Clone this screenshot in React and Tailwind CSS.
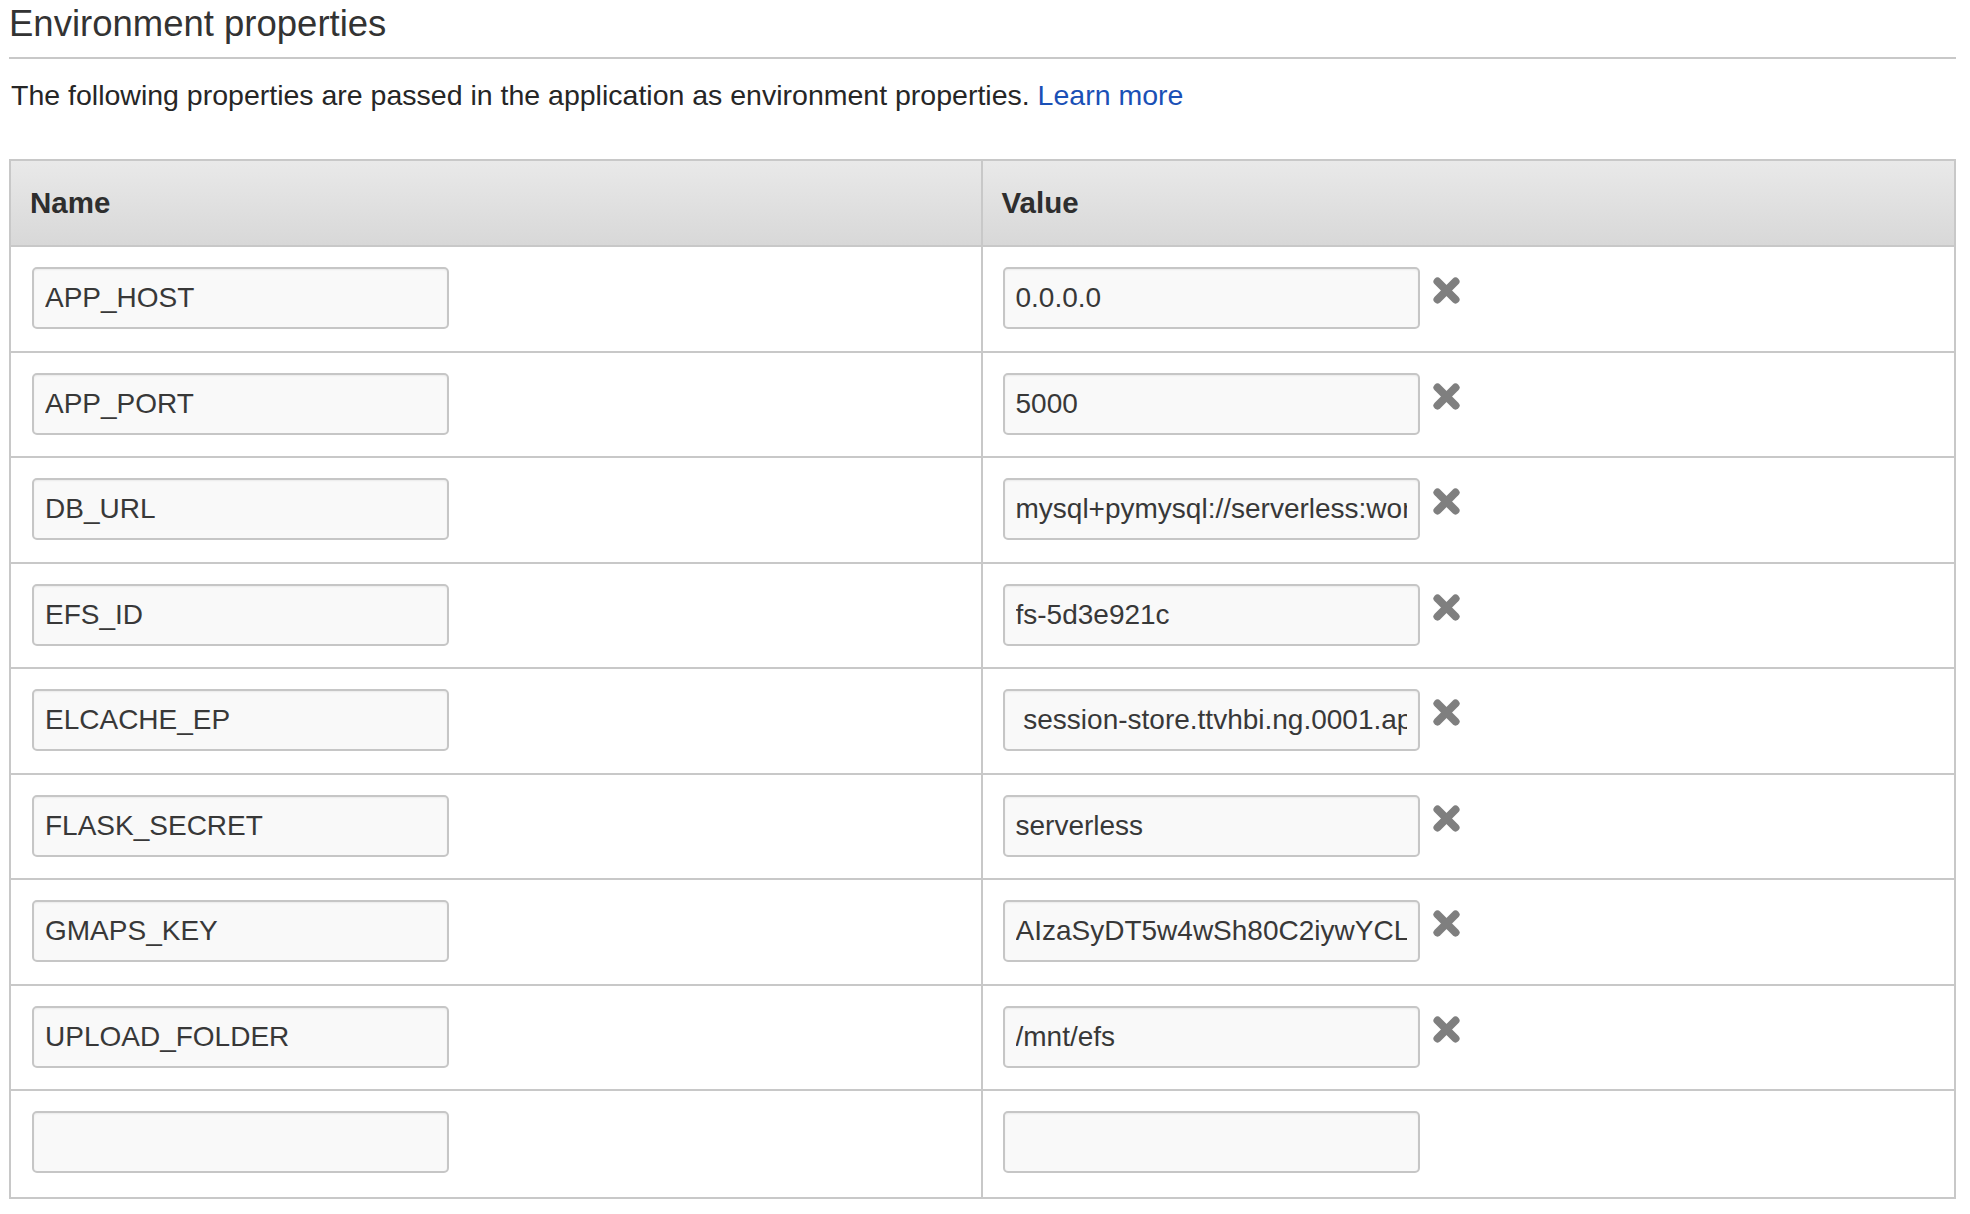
import React from "react";

const rows = [
  ["APP_HOST", "0.0.0.0"],
  ["APP_PORT", "5000"],
  ["DB_URL", "mysql+pymysql://serverless:workshop@serverless.cluster-c1.ap-southeast-1.rds.amazonaws.com/serverless"],
  ["EFS_ID", "fs-5d3e921c"],
  ["ELCACHE_EP", " session-store.ttvhbi.ng.0001.apse1.cache.amazonaws.com:6379"],
  ["FLASK_SECRET", "serverless"],
  ["GMAPS_KEY", "AIzaSyDT5w4wSh80C2iywYCLkq9oB3xHn7uPbQ"],
  ["UPLOAD_FOLDER", "/mnt/efs"],
  ["", ""],
];

function RemoveIcon() {
  return (
    <svg width="27" height="27" viewBox="0 0 27 27" className="shrink-0">
      <g stroke="#7f7f7f" strokeWidth="8" strokeLinecap="round">
        <line x1="4.5" y1="4.5" x2="22.5" y2="22.5" />
        <line x1="22.5" y1="4.5" x2="4.5" y2="22.5" />
      </g>
    </svg>
  );
}

function Field({ value }) {
  return (
    <input
      readOnly
      value={value}
      className="h-[62px] w-[417px] shrink-0 rounded-[5px] border-2 border-[#c6c6c6] bg-[#f9f9f9] pl-[11px] pr-[11px] text-[28px] text-[#383838] shadow-[inset_0_1px_2px_rgba(0,0,0,0.06)] outline-none"
    />
  );
}

export default function App() {
  return (
    <div className="min-h-[1214px] bg-white text-[#333] [font-family:'Liberation_Sans',Arial,Helvetica,sans-serif]">
      <div className="ml-[9px] w-[1947px]">
        <div className="border-b-2 border-[#c8c8c8] pt-[4px] pb-[13px]">
          <h1 className="text-[36.5px] leading-[40px] font-normal text-[#333]">Environment properties</h1>
        </div>
        <p className="mt-[20px] pl-[2px] text-[28.5px] leading-[32px] text-[#262626]">
          The following properties are passed in the application as environment properties.{" "}
          <a className="text-[#1a50b6]">Learn more</a>
        </p>
        <div className="mt-[48px] border-2 border-[#c8c8c8]">
          <div className="grid h-[86px] grid-cols-2 border-b-2 border-[#c8c8c8] bg-gradient-to-b from-[#e9e9e9] to-[#d8d8d8]">
            <div className="flex items-center border-r-2 border-[#c8c8c8] pl-[19px] text-[29.5px] font-bold text-[#2e2e2e]">
              Name
            </div>
            <div className="flex items-center pl-[19px] text-[29.5px] font-bold text-[#2e2e2e]">Value</div>
          </div>
          {rows.map(([name, value], i) => (
            <div
              key={i}
              className={
                "grid grid-cols-2" +
                (i % 2 === 0 ? " h-[106px]" : " h-[105px]") +
                (i < rows.length - 1 ? " border-b-2 border-[#c8c8c8]" : "")
              }
            >
              <div className="flex items-start border-r-2 border-[#c8c8c8] pl-[21px] pt-[20px]">
                <Field value={name} />
              </div>
              <div className="flex items-start pl-[20px] pt-[20px]">
                <Field value={value} />
                {i < rows.length - 1 && (
                  <div className="ml-[13px] mt-[10px]">
                    <RemoveIcon />
                  </div>
                )}
              </div>
            </div>
          ))}
        </div>
      </div>
    </div>
  );
}
